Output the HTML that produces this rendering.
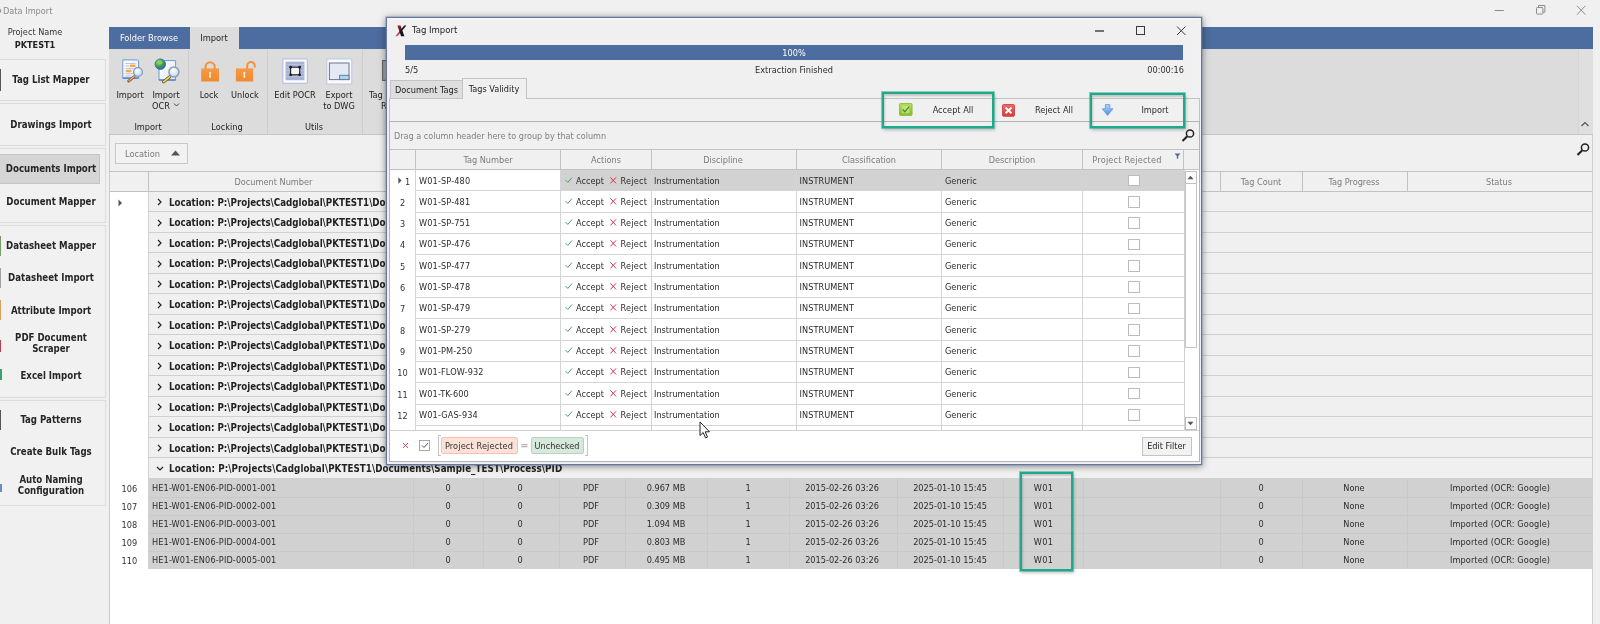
<!DOCTYPE html>
<html><head><meta charset="utf-8"><title>Data Import</title>
<style>
html,body{margin:0;padding:0}
body{width:1600px;height:624px;overflow:hidden;position:relative;background:#f0f0f0;font-family:"DejaVu Sans Condensed","Liberation Sans",sans-serif;font-size:9.1px;color:#2b2b2b}
div{position:absolute;box-sizing:border-box}
.t{height:16px;line-height:16px;white-space:pre}
.c{text-align:center}.r{text-align:right}
.b{font-weight:bold}
.h{color:#7a7a7a}
svg{position:absolute;overflow:visible}
</style></head><body>
<div id="app" style="left:0;top:0;width:1600px;height:624px;overflow:hidden;will-change:transform">

<svg style="left:0;top:8px" width="3" height="6"><circle cx="-1.4" cy="3" r="2.2" stroke="#8a8a8a" stroke-width="1" fill="none"/></svg>
<div class="t" style="left:3px;top:3px;color:#8a8a8a;font-size:9.15px">Data Import</div>
<svg style="left:1490px;top:2px" width="110" height="18"><g stroke="#8c8c8c" stroke-width="1" fill="none"><path d="M4.6 8.5h9.2"/><rect x="46.5" y="5.5" width="6.4" height="6.6" rx="0.8"/><path d="M48.5 5.5v-2h6.4v6.6h-2" /><path d="M87 3.8l8.4 8.8m0-8.8l-8.4 8.8"/></g></svg>
<div class="t c" style="left:-115px;top:24px;width:300px;color:#333">Project Name</div>
<div class="t b c" style="left:-115px;top:37px;width:300px;color:#222;font-size:9.05px">PKTEST1</div>
<div style="left:-2px;top:59px;width:108px;height:42px;border:1px solid #dcdcdc;background:#f1f1f1"></div>
<div style="left:-2px;top:103px;width:108px;height:43px;border:1px solid #dcdcdc;background:#f1f1f1"></div>
<div style="left:-2px;top:148px;width:108px;height:75px;border:1px solid #dcdcdc;background:#f1f1f1"></div>
<div style="left:-2px;top:224.6px;width:108px;height:173px;border:1px solid #dcdcdc;background:#f1f1f1"></div>
<div style="left:-2px;top:400px;width:108px;height:106px;border:1px solid #dcdcdc;background:#f1f1f1"></div>
<div style="left:0px;top:154px;width:100px;height:30px;background:#d5d5d5;border:1px solid #c4c4c4;border-left:none"></div>
<div class="t b c" style="left:-99px;top:72px;width:300px;color:#262626;font-size:9.6px">Tag List Mapper</div>
<div class="t b c" style="left:-99px;top:117px;width:300px;color:#262626;font-size:9.6px">Drawings Import</div>
<div class="t b c" style="left:-99px;top:160.5px;width:300px;color:#262626;font-size:9.6px">Documents Import</div>
<div class="t b c" style="left:-99px;top:194px;width:300px;color:#262626;font-size:9.6px">Document Mapper</div>
<div class="t b c" style="left:-99px;top:238px;width:300px;color:#262626;font-size:9.6px">Datasheet Mapper</div>
<div class="t b c" style="left:-99px;top:270px;width:300px;color:#262626;font-size:9.6px">Datasheet Import</div>
<div class="t b c" style="left:-99px;top:303px;width:300px;color:#262626;font-size:9.6px">Attribute Import</div>
<div class="t b c" style="left:-99px;top:330px;width:300px;color:#262626;font-size:9.6px">PDF Document</div>
<div class="t b c" style="left:-99px;top:341px;width:300px;color:#262626;font-size:9.6px">Scraper</div>
<div class="t b c" style="left:-99px;top:367.5px;width:300px;color:#262626;font-size:9.6px">Excel Import</div>
<div class="t b c" style="left:-99px;top:412px;width:300px;color:#262626;font-size:9.6px">Tag Patterns</div>
<div class="t b c" style="left:-99px;top:444px;width:300px;color:#262626;font-size:9.6px">Create Bulk Tags</div>
<div class="t b c" style="left:-99px;top:471.5px;width:300px;color:#262626;font-size:9.6px">Auto Naming</div>
<div class="t b c" style="left:-99px;top:483px;width:300px;color:#262626;font-size:9.6px">Configuration</div>
<div style="left:0px;top:69px;width:1px;height:22px;background:#555"></div>
<div style="left:0px;top:236px;width:1px;height:20px;background:#7a9a6a"></div>
<div style="left:0px;top:268px;width:1px;height:20px;background:#a0a0a0"></div>
<div style="left:0px;top:300px;width:1px;height:20px;background:#d8a060"></div>
<div style="left:0px;top:340px;width:1px;height:12px;background:#b04050"></div>
<div style="left:0px;top:369px;width:2px;height:11px;background:#3aa070"></div>
<div style="left:0px;top:410px;width:1px;height:20px;background:#555"></div>
<div style="left:0px;top:484px;width:2px;height:8px;background:#6a8ac0"></div>
<div style="left:109px;top:26.6px;width:1484px;height:22.4px;background:#4d6c9f"></div>
<div style="left:189.5px;top:26.6px;width:49.5px;height:23.4px;background:#dcdcdc"></div>
<div style="left:109px;top:49px;width:1484px;height:85px;background:#dcdcdc"></div>
<div style="left:109px;top:134px;width:1484px;height:1px;background:#c6c6c6"></div>
<div style="left:1578px;top:49px;width:15px;height:85px;background:#dfdfdf;border-left:1px solid #d4d4d4"></div>
<svg style="left:1580px;top:120px" width="10" height="8"><path d="M1.5 6l3.5-3.5l3.5 3.5" stroke="#555" stroke-width="1.2" fill="none"/></svg>
<div class="t c" style="left:-1px;top:30px;width:300px;color:#fff;font-size:9.2px">Folder Browse</div>
<div class="t c" style="left:64px;top:30px;width:300px;color:#222;font-size:9.2px">Import</div>
<div style="left:188px;top:50px;width:1px;height:84px;background:#cdcdcd"></div>
<div style="left:267px;top:50px;width:1px;height:84px;background:#cdcdcd"></div>
<div style="left:362px;top:50px;width:1px;height:84px;background:#cdcdcd"></div>
<div class="t c" style="left:-20px;top:87px;width:300px;color:#222;font-size:9.15px">Import</div>
<div class="t c" style="left:16px;top:87px;width:300px;color:#222;font-size:9.15px">Import</div>
<div class="t c" style="left:11px;top:98px;width:300px;color:#222;font-size:9.15px">OCR</div>
<div class="t c" style="left:59px;top:87px;width:300px;color:#222;font-size:9.15px">Lock</div>
<div class="t c" style="left:95px;top:87px;width:300px;color:#222;font-size:9.15px">Unlock</div>
<div class="t c" style="left:145px;top:87px;width:300px;color:#222;font-size:9.15px">Edit POCR</div>
<div class="t c" style="left:189px;top:87px;width:300px;color:#222;font-size:9.15px">Export</div>
<div class="t c" style="left:189px;top:98px;width:300px;color:#222;font-size:9.15px">to DWG</div>
<div class="t c" style="left:-2px;top:119px;width:300px;color:#222;font-size:9.15px">Import</div>
<div class="t c" style="left:77px;top:119px;width:300px;color:#222;font-size:9.15px">Locking</div>
<div class="t c" style="left:164px;top:119px;width:300px;color:#222;font-size:9.15px">Utils</div>
<div class="t" style="left:369px;top:87px;color:#222;font-size:9.15px">Tag</div>
<div class="t" style="left:381px;top:98px;color:#222;font-size:9.15px">R</div>
<svg style="left:173px;top:102px" width="8" height="6"><path d="M1 1.5l2.5 2.5l2.5-2.5" stroke="#444" stroke-width="1" fill="none"/></svg>
<svg width="0" height="0" style="left:0;top:0"><defs><radialGradient id="lens" cx="0.4" cy="0.35" r="0.7"><stop offset="0" stop-color="#ffffff"/><stop offset="1" stop-color="#b9d6f2"/></radialGradient><radialGradient id="globe" cx="0.35" cy="0.3" r="0.8"><stop offset="0" stop-color="#9fe07a"/><stop offset="0.55" stop-color="#3c9a4a"/><stop offset="1" stop-color="#2a5fb0"/></radialGradient><linearGradient id="pg" x1="0" y1="0" x2="1" y2="1"><stop offset="0" stop-color="#ffffff"/><stop offset="1" stop-color="#dfe8f6"/></linearGradient><linearGradient id="og" x1="0" y1="0" x2="0" y2="1"><stop offset="0" stop-color="#f59a44"/><stop offset="1" stop-color="#ee8a30"/></linearGradient></defs></svg>
<svg style="left:121px;top:58px" width="23" height="26" viewBox="0 0 23 26"><path d="M1.8 1.9h14.8l1 1v17.2h-15.8z" fill="url(#pg)" stroke="#6f98dc" stroke-width="1"/><path d="M1.8 20.1h15.8" stroke="#4f80d0" stroke-width="1.4"/><path d="M4.5 5.5h10M4.5 8h4M4.5 10.5h9M4.5 13h0M4.5 15.6h9M4.5 18h6" stroke="#aebbd2" stroke-width="0.8"/><rect x="9" y="6.6" width="5.6" height="2.4" fill="#f6ac42"/><rect x="4.8" y="11.8" width="5.6" height="2.4" fill="#f6ac42"/><path d="M13.2 18.6L7.6 23.2" stroke="#9a6232" stroke-width="2.8" stroke-linecap="round"/><path d="M13 18.5L8 22.6" stroke="#f0b070" stroke-width="1.2" stroke-linecap="round"/><circle cx="17" cy="14" r="4.4" fill="url(#lens)" stroke="#8496b6" stroke-width="1.3"/></svg>
<svg style="left:153px;top:57px" width="27" height="27" viewBox="0 0 27 27"><path d="M6 3.6h16.6v19.4h-16.6z" fill="url(#pg)" stroke="#6f98dc" stroke-width="1"/><path d="M6 23h16.6" stroke="#4f80d0" stroke-width="1.4"/><circle cx="7.3" cy="7.2" r="5.2" fill="url(#globe)" stroke="#3a6cc4" stroke-width="1"/><path d="M5 4.6q3-2 4.6 0.6q-0.4 2.4-2.8 2q-2 1.4-1.8-2.6z" fill="#7ad84a" opacity=".85"/><path d="M16.8 19.8L10.6 24.8" stroke="#6a5a20" stroke-width="3.2" stroke-linecap="round"/><path d="M16.6 19.9L10.8 24.6" stroke="#ecd650" stroke-width="1.8" stroke-linecap="round"/><circle cx="20.9" cy="15" r="5" fill="url(#lens)" stroke="#8e9cb4" stroke-width="1.5"/></svg>
<svg style="left:200px;top:60px" width="21" height="23" viewBox="0 0 21 23"><path d="M5.5 9.5v-2.6a4.6 4.6 0 0 1 9.2 0v2.6" fill="none" stroke="#f19238" stroke-width="2"/><rect x="1.2" y="8.4" width="17.8" height="13.1" fill="url(#og)"/><circle cx="10.1" cy="12.8" r="1.15" fill="#fdeacc"/><path d="M9.45 13h1.3l0.35 4.8h-2z" fill="#fdeacc"/></svg>
<svg style="left:234px;top:59px" width="25" height="24" viewBox="0 0 25 24"><path d="M13.2 10.5v-3.6a3.75 3.75 0 0 1 7.5 -0.2v1.9" fill="none" stroke="#f19238" stroke-width="2"/><rect x="1.9" y="9.4" width="17.3" height="13.1" fill="url(#og)"/><circle cx="10.3" cy="13.8" r="1.15" fill="#fdeacc"/><path d="M9.65 14h1.3l0.35 4.8h-2z" fill="#fdeacc"/></svg>
<svg style="left:282px;top:58px" width="26" height="26" viewBox="0 0 26 26"><rect x="0.8" y="0.8" width="24.6" height="24.6" rx="1" fill="#fafbfe" stroke="#b9c1dc" stroke-width="1.2"/><rect x="3.6" y="3.7" width="18.8" height="18.5" fill="#a9b4d4"/><path d="M3.6 6.5h18.8M3.6 9.5h18.8M3.6 12.5h18.8M3.6 15.5h18.8M3.6 18.5h18.8" stroke="#b9c3df" stroke-width="1"/><rect x="8.6" y="9.2" width="9.1" height="7.6" fill="#f4f5fa" stroke="#1c1c1c" stroke-width="1.1"/><g fill="#1c1c1c"><circle cx="8.6" cy="9.2" r="1.4"/><circle cx="17.7" cy="9.2" r="1.4"/><circle cx="8.6" cy="16.8" r="1.4"/><circle cx="17.7" cy="16.8" r="1.4"/></g></svg>
<svg style="left:326px;top:58px" width="27" height="27" viewBox="0 0 27 27"><rect x="0.8" y="0.8" width="25" height="25.4" rx="1" fill="#fafbfe" stroke="#c3cade" stroke-width="1.2"/><rect x="3.4" y="5" width="19.6" height="16.6" fill="#e6e9f3" stroke="#66749a" stroke-width="1"/><rect x="13.6" y="17.3" width="9.4" height="4.3" fill="#a9d6f2" stroke="#66749a" stroke-width="0.9"/></svg>
<svg style="left:382px;top:60px" width="6" height="21" viewBox="0 0 6 21"><rect x="0.6" y="0.6" width="8" height="19.8" fill="#a9a9a9" stroke="#666" stroke-width="1.2"/></svg>
<div style="left:109px;top:135px;width:1484px;height:37px;background:#f0f0f0"></div>
<div style="left:115px;top:143px;width:73px;height:21px;border:1px solid #c8c8c8;background:#f2f2f2"></div>
<div class="t" style="left:125px;top:145.5px;color:#7a7a7a;font-size:9.2px">Location</div>
<svg style="left:171px;top:150px" width="9" height="6"><path d="M0 5.5L4.5 0.5L9 5.5z" fill="#555"/></svg>
<svg style="left:1575.5px;top:142px" width="15" height="15"><circle cx="9" cy="5.5" r="3.6" stroke="#222" stroke-width="1.5" fill="none"/><path d="M6.3 8.2L1.5 13" stroke="#222" stroke-width="2"/></svg>
<div style="left:109px;top:171.3px;width:1484px;height:20.4px;background:#f0f0f0;border-top:1px solid #c2c2c2;border-bottom:1px solid #c2c2c2"></div>
<div style="left:148px;top:172px;width:1px;height:19px;background:#c2c2c2"></div>
<div style="left:1220px;top:172px;width:1px;height:19px;background:#c2c2c2"></div>
<div style="left:1302px;top:172px;width:1px;height:19px;background:#c2c2c2"></div>
<div style="left:1407px;top:172px;width:1px;height:19px;background:#c2c2c2"></div>
<div style="left:1592px;top:172px;width:1px;height:19px;background:#c2c2c2"></div>
<div class="t c" style="left:123.5px;top:174px;width:300px;color:#7a7a7a">Document Number</div>
<div class="t c" style="left:1111px;top:174px;width:300px;color:#7a7a7a">Tag Count</div>
<div class="t c" style="left:1204px;top:174px;width:300px;color:#7a7a7a">Tag Progress</div>
<div class="t c" style="left:1349px;top:174px;width:300px;color:#7a7a7a">Status</div>
<div style="left:109px;top:191.5px;width:39px;height:433px;background:#fff"></div>
<div style="left:148px;top:191.5px;width:1px;height:377px;background:#d0d0d0"></div>
<div style="left:149px;top:191.7px;width:1444px;height:20.51px;background:#f0f0f0;border-bottom:1px solid #d0d0d0"></div>
<svg style="left:157px;top:198.0px" width="6" height="8"><path d="M1 1l3 3l-3 3" stroke="#222" stroke-width="1.2" fill="none"/></svg>
<div class="t b" style="left:169px;top:194.7px;color:#222;font-size:9.7px">Location: P:\Projects\Cadglobal\PKTEST1\Documents</div>
<div style="left:149px;top:212.20999999999998px;width:1444px;height:20.51px;background:#f0f0f0;border-bottom:1px solid #d0d0d0"></div>
<svg style="left:157px;top:218.51px" width="6" height="8"><path d="M1 1l3 3l-3 3" stroke="#222" stroke-width="1.2" fill="none"/></svg>
<div class="t b" style="left:169px;top:215.20999999999998px;color:#222;font-size:9.7px">Location: P:\Projects\Cadglobal\PKTEST1\Documents</div>
<div style="left:149px;top:232.72px;width:1444px;height:20.51px;background:#f0f0f0;border-bottom:1px solid #d0d0d0"></div>
<svg style="left:157px;top:239.02px" width="6" height="8"><path d="M1 1l3 3l-3 3" stroke="#222" stroke-width="1.2" fill="none"/></svg>
<div class="t b" style="left:169px;top:235.72px;color:#222;font-size:9.7px">Location: P:\Projects\Cadglobal\PKTEST1\Documents</div>
<div style="left:149px;top:253.23px;width:1444px;height:20.51px;background:#f0f0f0;border-bottom:1px solid #d0d0d0"></div>
<svg style="left:157px;top:259.53px" width="6" height="8"><path d="M1 1l3 3l-3 3" stroke="#222" stroke-width="1.2" fill="none"/></svg>
<div class="t b" style="left:169px;top:256.23px;color:#222;font-size:9.7px">Location: P:\Projects\Cadglobal\PKTEST1\Documents</div>
<div style="left:149px;top:273.74px;width:1444px;height:20.51px;background:#f0f0f0;border-bottom:1px solid #d0d0d0"></div>
<svg style="left:157px;top:280.04px" width="6" height="8"><path d="M1 1l3 3l-3 3" stroke="#222" stroke-width="1.2" fill="none"/></svg>
<div class="t b" style="left:169px;top:276.74px;color:#222;font-size:9.7px">Location: P:\Projects\Cadglobal\PKTEST1\Documents</div>
<div style="left:149px;top:294.25px;width:1444px;height:20.51px;background:#f0f0f0;border-bottom:1px solid #d0d0d0"></div>
<svg style="left:157px;top:300.55px" width="6" height="8"><path d="M1 1l3 3l-3 3" stroke="#222" stroke-width="1.2" fill="none"/></svg>
<div class="t b" style="left:169px;top:297.25px;color:#222;font-size:9.7px">Location: P:\Projects\Cadglobal\PKTEST1\Documents</div>
<div style="left:149px;top:314.76px;width:1444px;height:20.51px;background:#f0f0f0;border-bottom:1px solid #d0d0d0"></div>
<svg style="left:157px;top:321.06px" width="6" height="8"><path d="M1 1l3 3l-3 3" stroke="#222" stroke-width="1.2" fill="none"/></svg>
<div class="t b" style="left:169px;top:317.76px;color:#222;font-size:9.7px">Location: P:\Projects\Cadglobal\PKTEST1\Documents</div>
<div style="left:149px;top:335.27px;width:1444px;height:20.51px;background:#f0f0f0;border-bottom:1px solid #d0d0d0"></div>
<svg style="left:157px;top:341.57px" width="6" height="8"><path d="M1 1l3 3l-3 3" stroke="#222" stroke-width="1.2" fill="none"/></svg>
<div class="t b" style="left:169px;top:338.27px;color:#222;font-size:9.7px">Location: P:\Projects\Cadglobal\PKTEST1\Documents</div>
<div style="left:149px;top:355.78px;width:1444px;height:20.51px;background:#f0f0f0;border-bottom:1px solid #d0d0d0"></div>
<svg style="left:157px;top:362.08px" width="6" height="8"><path d="M1 1l3 3l-3 3" stroke="#222" stroke-width="1.2" fill="none"/></svg>
<div class="t b" style="left:169px;top:358.78px;color:#222;font-size:9.7px">Location: P:\Projects\Cadglobal\PKTEST1\Documents</div>
<div style="left:149px;top:376.28999999999996px;width:1444px;height:20.51px;background:#f0f0f0;border-bottom:1px solid #d0d0d0"></div>
<svg style="left:157px;top:382.59px" width="6" height="8"><path d="M1 1l3 3l-3 3" stroke="#222" stroke-width="1.2" fill="none"/></svg>
<div class="t b" style="left:169px;top:379.28999999999996px;color:#222;font-size:9.7px">Location: P:\Projects\Cadglobal\PKTEST1\Documents</div>
<div style="left:149px;top:396.8px;width:1444px;height:20.51px;background:#f0f0f0;border-bottom:1px solid #d0d0d0"></div>
<svg style="left:157px;top:403.1px" width="6" height="8"><path d="M1 1l3 3l-3 3" stroke="#222" stroke-width="1.2" fill="none"/></svg>
<div class="t b" style="left:169px;top:399.8px;color:#222;font-size:9.7px">Location: P:\Projects\Cadglobal\PKTEST1\Documents</div>
<div style="left:149px;top:417.31px;width:1444px;height:20.51px;background:#f0f0f0;border-bottom:1px solid #d0d0d0"></div>
<svg style="left:157px;top:423.61px" width="6" height="8"><path d="M1 1l3 3l-3 3" stroke="#222" stroke-width="1.2" fill="none"/></svg>
<div class="t b" style="left:169px;top:420.31px;color:#222;font-size:9.7px">Location: P:\Projects\Cadglobal\PKTEST1\Documents</div>
<div style="left:149px;top:437.82px;width:1444px;height:20.51px;background:#f0f0f0;border-bottom:1px solid #d0d0d0"></div>
<svg style="left:157px;top:444.12px" width="6" height="8"><path d="M1 1l3 3l-3 3" stroke="#222" stroke-width="1.2" fill="none"/></svg>
<div class="t b" style="left:169px;top:440.82px;color:#222;font-size:9.7px">Location: P:\Projects\Cadglobal\PKTEST1\Documents</div>
<div style="left:149px;top:458.33px;width:1444px;height:20.51px;background:#f0f0f0;border-bottom:1px solid #d0d0d0"></div>
<svg style="left:156px;top:465.63px" width="8" height="6"><path d="M1 1l3 3l3-3" stroke="#222" stroke-width="1.2" fill="none"/></svg>
<div class="t b" style="left:169px;top:461.33px;color:#222;font-size:9.7px;letter-spacing:0.073px">Location: P:\Projects\Cadglobal\PKTEST1\Documents\Sample_TEST\Process\PID</div>
<svg style="left:117.7px;top:198.5px" width="5" height="8"><path d="M0.5 0.5L4 4L0.5 7.5z" fill="#555"/></svg>
<div style="left:149px;top:478.8px;width:1444px;height:90px;background:#d1d1d1"></div>
<div style="left:109px;top:568.5px;width:1484px;height:56px;background:#fff"></div>
<div style="left:1592px;top:135px;width:1px;height:489px;background:#cfcfcf"></div>
<div style="left:109px;top:135px;width:1px;height:489px;background:#cbcbcb"></div>
<div style="left:413px;top:478.8px;width:1px;height:90px;background:#c9c9c9"></div>
<div style="left:483px;top:478.8px;width:1px;height:90px;background:#c9c9c9"></div>
<div style="left:559px;top:478.8px;width:1px;height:90px;background:#c9c9c9"></div>
<div style="left:625px;top:478.8px;width:1px;height:90px;background:#c9c9c9"></div>
<div style="left:707px;top:478.8px;width:1px;height:90px;background:#c9c9c9"></div>
<div style="left:789px;top:478.8px;width:1px;height:90px;background:#c9c9c9"></div>
<div style="left:897px;top:478.8px;width:1px;height:90px;background:#c9c9c9"></div>
<div style="left:1003px;top:478.8px;width:1px;height:90px;background:#c9c9c9"></div>
<div style="left:1083px;top:478.8px;width:1px;height:90px;background:#c9c9c9"></div>
<div style="left:1220px;top:478.8px;width:1px;height:90px;background:#c9c9c9"></div>
<div style="left:1302px;top:478.8px;width:1px;height:90px;background:#c9c9c9"></div>
<div style="left:1407px;top:478.8px;width:1px;height:90px;background:#c9c9c9"></div>
<div class="t" style="left:121.5px;top:480.8px;color:#333">106</div>
<div class="t" style="left:152px;top:479.8px;letter-spacing:0.124px">HE1-W01-EN06-PID-0001-001</div>
<div class="t c" style="left:298px;top:479.8px;width:300px;">0</div>
<div class="t c" style="left:370px;top:479.8px;width:300px;">0</div>
<div class="t c" style="left:441px;top:479.8px;width:300px;">PDF</div>
<div class="t c" style="left:516px;top:479.8px;width:300px;">0.967 MB</div>
<div class="t c" style="left:598px;top:479.8px;width:300px;">1</div>
<div class="t c" style="left:692px;top:479.8px;width:300px;">2015-02-26 03:26</div>
<div class="t c" style="left:800px;top:479.8px;width:300px;">2025-01-10 15:45</div>
<div class="t c" style="left:893.5px;top:479.8px;width:300px;letter-spacing:0.3px">W01</div>
<div class="t c" style="left:1111px;top:479.8px;width:300px;">0</div>
<div class="t c" style="left:1204px;top:479.8px;width:300px;">None</div>
<div class="t c" style="left:1350px;top:479.8px;width:300px;letter-spacing:0.09px">Imported (OCR: Google)</div>
<div style="left:149px;top:496.8px;width:1444px;height:1px;background:#c9c9c9"></div>
<div class="t" style="left:121.5px;top:498.8px;color:#333">107</div>
<div class="t" style="left:152px;top:497.8px;letter-spacing:0.124px">HE1-W01-EN06-PID-0002-001</div>
<div class="t c" style="left:298px;top:497.8px;width:300px;">0</div>
<div class="t c" style="left:370px;top:497.8px;width:300px;">0</div>
<div class="t c" style="left:441px;top:497.8px;width:300px;">PDF</div>
<div class="t c" style="left:516px;top:497.8px;width:300px;">0.309 MB</div>
<div class="t c" style="left:598px;top:497.8px;width:300px;">1</div>
<div class="t c" style="left:692px;top:497.8px;width:300px;">2015-02-26 03:26</div>
<div class="t c" style="left:800px;top:497.8px;width:300px;">2025-01-10 15:45</div>
<div class="t c" style="left:893.5px;top:497.8px;width:300px;letter-spacing:0.3px">W01</div>
<div class="t c" style="left:1111px;top:497.8px;width:300px;">0</div>
<div class="t c" style="left:1204px;top:497.8px;width:300px;">None</div>
<div class="t c" style="left:1350px;top:497.8px;width:300px;letter-spacing:0.09px">Imported (OCR: Google)</div>
<div style="left:149px;top:514.8px;width:1444px;height:1px;background:#c9c9c9"></div>
<div class="t" style="left:121.5px;top:516.8px;color:#333">108</div>
<div class="t" style="left:152px;top:515.8px;letter-spacing:0.124px">HE1-W01-EN06-PID-0003-001</div>
<div class="t c" style="left:298px;top:515.8px;width:300px;">0</div>
<div class="t c" style="left:370px;top:515.8px;width:300px;">0</div>
<div class="t c" style="left:441px;top:515.8px;width:300px;">PDF</div>
<div class="t c" style="left:516px;top:515.8px;width:300px;">1.094 MB</div>
<div class="t c" style="left:598px;top:515.8px;width:300px;">1</div>
<div class="t c" style="left:692px;top:515.8px;width:300px;">2015-02-26 03:26</div>
<div class="t c" style="left:800px;top:515.8px;width:300px;">2025-01-10 15:45</div>
<div class="t c" style="left:893.5px;top:515.8px;width:300px;letter-spacing:0.3px">W01</div>
<div class="t c" style="left:1111px;top:515.8px;width:300px;">0</div>
<div class="t c" style="left:1204px;top:515.8px;width:300px;">None</div>
<div class="t c" style="left:1350px;top:515.8px;width:300px;letter-spacing:0.09px">Imported (OCR: Google)</div>
<div style="left:149px;top:532.8px;width:1444px;height:1px;background:#c9c9c9"></div>
<div class="t" style="left:121.5px;top:534.8px;color:#333">109</div>
<div class="t" style="left:152px;top:533.8px;letter-spacing:0.124px">HE1-W01-EN06-PID-0004-001</div>
<div class="t c" style="left:298px;top:533.8px;width:300px;">0</div>
<div class="t c" style="left:370px;top:533.8px;width:300px;">0</div>
<div class="t c" style="left:441px;top:533.8px;width:300px;">PDF</div>
<div class="t c" style="left:516px;top:533.8px;width:300px;">0.803 MB</div>
<div class="t c" style="left:598px;top:533.8px;width:300px;">1</div>
<div class="t c" style="left:692px;top:533.8px;width:300px;">2015-02-26 03:26</div>
<div class="t c" style="left:800px;top:533.8px;width:300px;">2025-01-10 15:45</div>
<div class="t c" style="left:893.5px;top:533.8px;width:300px;letter-spacing:0.3px">W01</div>
<div class="t c" style="left:1111px;top:533.8px;width:300px;">0</div>
<div class="t c" style="left:1204px;top:533.8px;width:300px;">None</div>
<div class="t c" style="left:1350px;top:533.8px;width:300px;letter-spacing:0.09px">Imported (OCR: Google)</div>
<div style="left:149px;top:550.8px;width:1444px;height:1px;background:#c9c9c9"></div>
<div class="t" style="left:121.5px;top:552.8px;color:#333">110</div>
<div class="t" style="left:152px;top:551.8px;letter-spacing:0.124px">HE1-W01-EN06-PID-0005-001</div>
<div class="t c" style="left:298px;top:551.8px;width:300px;">0</div>
<div class="t c" style="left:370px;top:551.8px;width:300px;">0</div>
<div class="t c" style="left:441px;top:551.8px;width:300px;">PDF</div>
<div class="t c" style="left:516px;top:551.8px;width:300px;">0.495 MB</div>
<div class="t c" style="left:598px;top:551.8px;width:300px;">1</div>
<div class="t c" style="left:692px;top:551.8px;width:300px;">2015-02-26 03:26</div>
<div class="t c" style="left:800px;top:551.8px;width:300px;">2025-01-10 15:45</div>
<div class="t c" style="left:893.5px;top:551.8px;width:300px;letter-spacing:0.3px">W01</div>
<div class="t c" style="left:1111px;top:551.8px;width:300px;">0</div>
<div class="t c" style="left:1204px;top:551.8px;width:300px;">None</div>
<div class="t c" style="left:1350px;top:551.8px;width:300px;letter-spacing:0.09px">Imported (OCR: Google)</div>
<div style="left:386px;top:17px;width:815.5px;height:447.5px;background:#f0f0f0;border:1px solid #64789f;box-shadow:0 0 0 0.6px rgba(120,140,175,.5),0 1px 7px rgba(0,0,0,.5)"></div>
<div style="left:387px;top:18px;width:813.5px;height:445.5px;border:2px solid #eef1f7;border-top-color:#f4f6fa"></div>
<svg style="left:395px;top:24.5px" width="12" height="12" viewBox="0 0 12 12"><defs><linearGradient id="xg1" x1="0" y1="0" x2="0.6" y2="1"><stop offset="0" stop-color="#a8202c"/><stop offset="0.5" stop-color="#5a1018"/><stop offset="0.62" stop-color="#141414"/></linearGradient><linearGradient id="xg2" x1="1" y1="0" x2="0" y2="1"><stop offset="0.42" stop-color="#141414"/><stop offset="0.6" stop-color="#a83040"/><stop offset="1" stop-color="#e07080"/></linearGradient></defs><path d="M9.3 0.5h2.1L2.6 11.3h-2.4z" fill="url(#xg2)"/><path d="M2.4 0.5h3.1l3.9 10.8h-3.3z" fill="url(#xg1)"/></svg>
<div class="t" style="left:412px;top:22px;color:#222;font-size:9.5px">Tag Import</div>
<svg style="left:1085px;top:20px" width="110" height="22"><g stroke="#3a3a3a" stroke-width="1" fill="none"><path d="M10 11h9" stroke-width="1.4"/><rect x="51.5" y="6.5" width="8" height="8"/><path d="M92 6.5l8.5 8.5m0-8.5l-8.5 8.5"/></g></svg>
<div style="left:405px;top:45px;width:778px;height:15px;background:#4d6c9f"></div>
<div class="t c" style="left:644px;top:44.5px;width:300px;color:#fff">100%</div>
<div class="t" style="left:405px;top:62px;">5/5</div>
<div class="t c" style="left:644px;top:62px;width:300px;">Extraction Finished</div>
<div class="t r" style="left:884px;top:62px;width:300px;">00:00:16</div>
<div style="left:390px;top:80px;width:73px;height:18.5px;background:#dedede;border:1px solid #c3c3c3;border-bottom:none"></div>
<div style="left:389px;top:98px;width:810.5px;height:24px;border:1px solid #c3c3c3;border-bottom:none;background:#f0f0f0"></div>
<div style="left:462px;top:78px;width:65px;height:21px;background:#f0f0f0;border:1px solid #c3c3c3;border-bottom:none"></div>
<div class="t c" style="left:276.5px;top:81.5px;width:300px;color:#222">Document Tags</div>
<div class="t c" style="left:344px;top:80.5px;width:300px;color:#222">Tags Validity</div>
<div class="t c" style="left:803px;top:101.5px;width:300px;">Accept All</div>
<div class="t c" style="left:904px;top:101.5px;width:300px;">Reject All</div>
<div class="t c" style="left:1005px;top:101.5px;width:300px;">Import</div>
<svg style="left:899px;top:103px" width="14" height="13" viewBox="0 0 14 13"><defs><linearGradient id="acg" x1="0" y1="0" x2="0" y2="1"><stop offset="0" stop-color="#b4dc5a"/><stop offset="1" stop-color="#86bd2e"/></linearGradient></defs><rect x="0.5" y="0.5" width="12.6" height="12" rx="1" fill="url(#acg)" stroke="#86b63a" stroke-width="0.8"/><rect x="2.8" y="3" width="7.6" height="7.2" fill="#d6ecaa" opacity=".55"/><path d="M3.6 6.4l2.2 2.4L10.2 3.6" fill="none" stroke="#4f8a1e" stroke-width="1.3"/></svg>
<svg style="left:1001.5px;top:103.5px" width="13" height="13" viewBox="0 0 13 13"><defs><linearGradient id="rjg" x1="0" y1="0" x2="0" y2="1"><stop offset="0" stop-color="#ee6a6a"/><stop offset="1" stop-color="#d83a3a"/></linearGradient></defs><rect x="0.5" y="0.5" width="12" height="11.8" rx="1" fill="url(#rjg)" stroke="#c63a3a" stroke-width="0.8"/><path d="M3.6 3.6l5.8 5.6m0-5.6l-5.8 5.6" fill="none" stroke="#fff" stroke-width="2"/></svg>
<svg style="left:1102px;top:104px" width="12" height="13" viewBox="0 0 12 13"><defs><linearGradient id="img" x1="0" y1="0" x2="0" y2="1"><stop offset="0" stop-color="#b4d6f8"/><stop offset="1" stop-color="#4a92e0"/></linearGradient></defs><path d="M3.4 0.6h4.4v4.2h3.2l-5.4 6.6l-5.4-6.6h3.2z" fill="url(#img)" stroke="#5a9ae0" stroke-width="0.8"/></svg>
<div style="left:389px;top:121px;width:810.5px;height:341px;background:#fff;border:1px solid #b4b4b4"></div>
<div style="left:390px;top:122px;width:808.5px;height:27px;background:#f0f0f0"></div>
<div class="t" style="left:394px;top:128px;color:#808080;font-size:9px">Drag a column header here to group by that column</div>
<svg style="left:1180.7px;top:128px" width="15" height="15"><circle cx="9" cy="5.5" r="3.6" stroke="#222" stroke-width="1.5" fill="none"/><path d="M6.3 8.2L1.5 13" stroke="#222" stroke-width="2"/></svg>
<div style="left:390px;top:149px;width:808.5px;height:20.5px;background:#f0f0f0;border-top:1px solid #c2c2c2;border-bottom:1px solid #c2c2c2"></div>
<div style="left:415px;top:150px;width:1px;height:19px;background:#c2c2c2"></div>
<div style="left:560px;top:150px;width:1px;height:19px;background:#c2c2c2"></div>
<div style="left:651px;top:150px;width:1px;height:19px;background:#c2c2c2"></div>
<div style="left:796px;top:150px;width:1px;height:19px;background:#c2c2c2"></div>
<div style="left:941px;top:150px;width:1px;height:19px;background:#c2c2c2"></div>
<div style="left:1082px;top:150px;width:1px;height:19px;background:#c2c2c2"></div>
<div style="left:1183px;top:150px;width:1px;height:19px;background:#c2c2c2"></div>
<div class="t c" style="left:338px;top:151.5px;width:300px;color:#7a7a7a">Tag Number</div>
<div class="t c" style="left:456px;top:151.5px;width:300px;color:#7a7a7a">Actions</div>
<div class="t c" style="left:573px;top:151.5px;width:300px;color:#7a7a7a">Discipline</div>
<div class="t c" style="left:719px;top:151.5px;width:300px;color:#7a7a7a">Classification</div>
<div class="t c" style="left:862px;top:151.5px;width:300px;color:#7a7a7a">Description</div>
<div class="t c" style="left:977px;top:151.5px;width:300px;color:#7a7a7a;letter-spacing:0.2px">Project Rejected</div>
<svg style="left:1174px;top:153px" width="7" height="7"><path d="M0.5 0.5h6l-2.3 2.6v3l-1.4-0.9v-2.1z" fill="#4d6c9f"/></svg>
<div style="left:560.5px;top:170px;width:623px;height:20.33px;background:#d2d2d2"></div>
<div style="left:415px;top:190.32999999999998px;width:768.5px;height:1px;background:#d4d4d4"></div>
<div class="t c" style="left:257.7px;top:173.5px;width:300px;color:#333">1</div>
<div class="t" style="left:419px;top:172.5px;letter-spacing:0.13px">W01-SP-480</div>
<svg style="left:565px;top:176.90px" width="8" height="7"><path d="M0.5 3.1l2.3 2.3L6.9 0.6" stroke="#4a9a64" stroke-width="1" fill="none"/></svg>
<div class="t" style="left:576px;top:172.5px;">Accept</div>
<svg style="left:610px;top:176.90px" width="7" height="7"><path d="M0.4 0.4l5.6 6m0-6l-5.6 6" stroke="#d8304c" stroke-width="1" fill="none"/></svg>
<div class="t" style="left:620.5px;top:172.5px;letter-spacing:0.25px">Reject</div>
<div class="t" style="left:654px;top:172.5px;">Instrumentation</div>
<div class="t" style="left:799.5px;top:172.5px;letter-spacing:0.08px">INSTRUMENT</div>
<div class="t" style="left:945px;top:172.5px;">Generic</div>
<div style="left:1128px;top:174.8px;width:12px;height:11.4px;background:#fff;border:1px solid #bcbcbc"></div>
<div style="left:415px;top:211.65999999999997px;width:768.5px;height:1px;background:#d4d4d4"></div>
<div class="t c" style="left:252.5px;top:194.82999999999998px;width:300px;color:#333">2</div>
<div class="t" style="left:419px;top:193.82999999999998px;letter-spacing:0.13px">W01-SP-481</div>
<svg style="left:565px;top:197.90px" width="8" height="7"><path d="M0.5 3.1l2.3 2.3L6.9 0.6" stroke="#4a9a64" stroke-width="1" fill="none"/></svg>
<div class="t" style="left:576px;top:193.82999999999998px;">Accept</div>
<svg style="left:610px;top:197.90px" width="7" height="7"><path d="M0.4 0.4l5.6 6m0-6l-5.6 6" stroke="#d8304c" stroke-width="1" fill="none"/></svg>
<div class="t" style="left:620.5px;top:193.82999999999998px;letter-spacing:0.25px">Reject</div>
<div class="t" style="left:654px;top:193.82999999999998px;">Instrumentation</div>
<div class="t" style="left:799.5px;top:193.82999999999998px;letter-spacing:0.08px">INSTRUMENT</div>
<div class="t" style="left:945px;top:193.82999999999998px;">Generic</div>
<div style="left:1128px;top:196.13px;width:12px;height:11.4px;background:#fff;border:1px solid #bcbcbc"></div>
<div style="left:415px;top:232.99px;width:768.5px;height:1px;background:#d4d4d4"></div>
<div class="t c" style="left:252.5px;top:216.16px;width:300px;color:#333">3</div>
<div class="t" style="left:419px;top:215.16px;letter-spacing:0.13px">W01-SP-751</div>
<svg style="left:565px;top:218.90px" width="8" height="7"><path d="M0.5 3.1l2.3 2.3L6.9 0.6" stroke="#4a9a64" stroke-width="1" fill="none"/></svg>
<div class="t" style="left:576px;top:215.16px;">Accept</div>
<svg style="left:610px;top:218.90px" width="7" height="7"><path d="M0.4 0.4l5.6 6m0-6l-5.6 6" stroke="#d8304c" stroke-width="1" fill="none"/></svg>
<div class="t" style="left:620.5px;top:215.16px;letter-spacing:0.25px">Reject</div>
<div class="t" style="left:654px;top:215.16px;">Instrumentation</div>
<div class="t" style="left:799.5px;top:215.16px;letter-spacing:0.08px">INSTRUMENT</div>
<div class="t" style="left:945px;top:215.16px;">Generic</div>
<div style="left:1128px;top:217.46px;width:12px;height:11.4px;background:#fff;border:1px solid #bcbcbc"></div>
<div style="left:415px;top:254.32px;width:768.5px;height:1px;background:#d4d4d4"></div>
<div class="t c" style="left:252.5px;top:237.49px;width:300px;color:#333">4</div>
<div class="t" style="left:419px;top:236.49px;letter-spacing:0.13px">W01-SP-476</div>
<svg style="left:565px;top:239.90px" width="8" height="7"><path d="M0.5 3.1l2.3 2.3L6.9 0.6" stroke="#4a9a64" stroke-width="1" fill="none"/></svg>
<div class="t" style="left:576px;top:236.49px;">Accept</div>
<svg style="left:610px;top:239.90px" width="7" height="7"><path d="M0.4 0.4l5.6 6m0-6l-5.6 6" stroke="#d8304c" stroke-width="1" fill="none"/></svg>
<div class="t" style="left:620.5px;top:236.49px;letter-spacing:0.25px">Reject</div>
<div class="t" style="left:654px;top:236.49px;">Instrumentation</div>
<div class="t" style="left:799.5px;top:236.49px;letter-spacing:0.08px">INSTRUMENT</div>
<div class="t" style="left:945px;top:236.49px;">Generic</div>
<div style="left:1128px;top:238.79000000000002px;width:12px;height:11.4px;background:#fff;border:1px solid #bcbcbc"></div>
<div style="left:415px;top:275.65px;width:768.5px;height:1px;background:#d4d4d4"></div>
<div class="t c" style="left:252.5px;top:258.82px;width:300px;color:#333">5</div>
<div class="t" style="left:419px;top:257.82px;letter-spacing:0.13px">W01-SP-477</div>
<svg style="left:565px;top:261.90px" width="8" height="7"><path d="M0.5 3.1l2.3 2.3L6.9 0.6" stroke="#4a9a64" stroke-width="1" fill="none"/></svg>
<div class="t" style="left:576px;top:257.82px;">Accept</div>
<svg style="left:610px;top:261.90px" width="7" height="7"><path d="M0.4 0.4l5.6 6m0-6l-5.6 6" stroke="#d8304c" stroke-width="1" fill="none"/></svg>
<div class="t" style="left:620.5px;top:257.82px;letter-spacing:0.25px">Reject</div>
<div class="t" style="left:654px;top:257.82px;">Instrumentation</div>
<div class="t" style="left:799.5px;top:257.82px;letter-spacing:0.08px">INSTRUMENT</div>
<div class="t" style="left:945px;top:257.82px;">Generic</div>
<div style="left:1128px;top:260.12px;width:12px;height:11.4px;background:#fff;border:1px solid #bcbcbc"></div>
<div style="left:415px;top:296.97999999999996px;width:768.5px;height:1px;background:#d4d4d4"></div>
<div class="t c" style="left:252.5px;top:280.15px;width:300px;color:#333">6</div>
<div class="t" style="left:419px;top:279.15px;letter-spacing:0.13px">W01-SP-478</div>
<svg style="left:565px;top:282.90px" width="8" height="7"><path d="M0.5 3.1l2.3 2.3L6.9 0.6" stroke="#4a9a64" stroke-width="1" fill="none"/></svg>
<div class="t" style="left:576px;top:279.15px;">Accept</div>
<svg style="left:610px;top:282.90px" width="7" height="7"><path d="M0.4 0.4l5.6 6m0-6l-5.6 6" stroke="#d8304c" stroke-width="1" fill="none"/></svg>
<div class="t" style="left:620.5px;top:279.15px;letter-spacing:0.25px">Reject</div>
<div class="t" style="left:654px;top:279.15px;">Instrumentation</div>
<div class="t" style="left:799.5px;top:279.15px;letter-spacing:0.08px">INSTRUMENT</div>
<div class="t" style="left:945px;top:279.15px;">Generic</div>
<div style="left:1128px;top:281.45px;width:12px;height:11.4px;background:#fff;border:1px solid #bcbcbc"></div>
<div style="left:415px;top:318.31px;width:768.5px;height:1px;background:#d4d4d4"></div>
<div class="t c" style="left:252.5px;top:301.48px;width:300px;color:#333">7</div>
<div class="t" style="left:419px;top:300.48px;letter-spacing:0.13px">W01-SP-479</div>
<svg style="left:565px;top:303.90px" width="8" height="7"><path d="M0.5 3.1l2.3 2.3L6.9 0.6" stroke="#4a9a64" stroke-width="1" fill="none"/></svg>
<div class="t" style="left:576px;top:300.48px;">Accept</div>
<svg style="left:610px;top:303.90px" width="7" height="7"><path d="M0.4 0.4l5.6 6m0-6l-5.6 6" stroke="#d8304c" stroke-width="1" fill="none"/></svg>
<div class="t" style="left:620.5px;top:300.48px;letter-spacing:0.25px">Reject</div>
<div class="t" style="left:654px;top:300.48px;">Instrumentation</div>
<div class="t" style="left:799.5px;top:300.48px;letter-spacing:0.08px">INSTRUMENT</div>
<div class="t" style="left:945px;top:300.48px;">Generic</div>
<div style="left:1128px;top:302.78000000000003px;width:12px;height:11.4px;background:#fff;border:1px solid #bcbcbc"></div>
<div style="left:415px;top:339.64px;width:768.5px;height:1px;background:#d4d4d4"></div>
<div class="t c" style="left:252.5px;top:322.81px;width:300px;color:#333">8</div>
<div class="t" style="left:419px;top:321.81px;letter-spacing:0.13px">W01-SP-279</div>
<svg style="left:565px;top:325.90px" width="8" height="7"><path d="M0.5 3.1l2.3 2.3L6.9 0.6" stroke="#4a9a64" stroke-width="1" fill="none"/></svg>
<div class="t" style="left:576px;top:321.81px;">Accept</div>
<svg style="left:610px;top:325.90px" width="7" height="7"><path d="M0.4 0.4l5.6 6m0-6l-5.6 6" stroke="#d8304c" stroke-width="1" fill="none"/></svg>
<div class="t" style="left:620.5px;top:321.81px;letter-spacing:0.25px">Reject</div>
<div class="t" style="left:654px;top:321.81px;">Instrumentation</div>
<div class="t" style="left:799.5px;top:321.81px;letter-spacing:0.08px">INSTRUMENT</div>
<div class="t" style="left:945px;top:321.81px;">Generic</div>
<div style="left:1128px;top:324.11px;width:12px;height:11.4px;background:#fff;border:1px solid #bcbcbc"></div>
<div style="left:415px;top:360.96999999999997px;width:768.5px;height:1px;background:#d4d4d4"></div>
<div class="t c" style="left:252.5px;top:344.14px;width:300px;color:#333">9</div>
<div class="t" style="left:419px;top:343.14px;letter-spacing:0.13px">W01-PM-250</div>
<svg style="left:565px;top:346.90px" width="8" height="7"><path d="M0.5 3.1l2.3 2.3L6.9 0.6" stroke="#4a9a64" stroke-width="1" fill="none"/></svg>
<div class="t" style="left:576px;top:343.14px;">Accept</div>
<svg style="left:610px;top:346.90px" width="7" height="7"><path d="M0.4 0.4l5.6 6m0-6l-5.6 6" stroke="#d8304c" stroke-width="1" fill="none"/></svg>
<div class="t" style="left:620.5px;top:343.14px;letter-spacing:0.25px">Reject</div>
<div class="t" style="left:654px;top:343.14px;">Instrumentation</div>
<div class="t" style="left:799.5px;top:343.14px;letter-spacing:0.08px">INSTRUMENT</div>
<div class="t" style="left:945px;top:343.14px;">Generic</div>
<div style="left:1128px;top:345.44px;width:12px;height:11.4px;background:#fff;border:1px solid #bcbcbc"></div>
<div style="left:415px;top:382.29999999999995px;width:768.5px;height:1px;background:#d4d4d4"></div>
<div class="t c" style="left:252.5px;top:365.46999999999997px;width:300px;color:#333">10</div>
<div class="t" style="left:419px;top:364.46999999999997px;letter-spacing:0.13px">W01-FLOW-932</div>
<svg style="left:565px;top:367.90px" width="8" height="7"><path d="M0.5 3.1l2.3 2.3L6.9 0.6" stroke="#4a9a64" stroke-width="1" fill="none"/></svg>
<div class="t" style="left:576px;top:364.46999999999997px;">Accept</div>
<svg style="left:610px;top:367.90px" width="7" height="7"><path d="M0.4 0.4l5.6 6m0-6l-5.6 6" stroke="#d8304c" stroke-width="1" fill="none"/></svg>
<div class="t" style="left:620.5px;top:364.46999999999997px;letter-spacing:0.25px">Reject</div>
<div class="t" style="left:654px;top:364.46999999999997px;">Instrumentation</div>
<div class="t" style="left:799.5px;top:364.46999999999997px;letter-spacing:0.08px">INSTRUMENT</div>
<div class="t" style="left:945px;top:364.46999999999997px;">Generic</div>
<div style="left:1128px;top:366.77px;width:12px;height:11.4px;background:#fff;border:1px solid #bcbcbc"></div>
<div style="left:415px;top:403.62999999999994px;width:768.5px;height:1px;background:#d4d4d4"></div>
<div class="t c" style="left:252.5px;top:386.79999999999995px;width:300px;color:#333">11</div>
<div class="t" style="left:419px;top:385.79999999999995px;letter-spacing:0.13px">W01-TK-600</div>
<svg style="left:565px;top:389.90px" width="8" height="7"><path d="M0.5 3.1l2.3 2.3L6.9 0.6" stroke="#4a9a64" stroke-width="1" fill="none"/></svg>
<div class="t" style="left:576px;top:385.79999999999995px;">Accept</div>
<svg style="left:610px;top:389.90px" width="7" height="7"><path d="M0.4 0.4l5.6 6m0-6l-5.6 6" stroke="#d8304c" stroke-width="1" fill="none"/></svg>
<div class="t" style="left:620.5px;top:385.79999999999995px;letter-spacing:0.25px">Reject</div>
<div class="t" style="left:654px;top:385.79999999999995px;">Instrumentation</div>
<div class="t" style="left:799.5px;top:385.79999999999995px;letter-spacing:0.08px">INSTRUMENT</div>
<div class="t" style="left:945px;top:385.79999999999995px;">Generic</div>
<div style="left:1128px;top:388.09999999999997px;width:12px;height:11.4px;background:#fff;border:1px solid #bcbcbc"></div>
<div style="left:415px;top:424.96px;width:768.5px;height:1px;background:#d4d4d4"></div>
<div class="t c" style="left:252.5px;top:408.13px;width:300px;color:#333">12</div>
<div class="t" style="left:419px;top:407.13px;letter-spacing:0.13px">W01-GAS-934</div>
<svg style="left:565px;top:410.90px" width="8" height="7"><path d="M0.5 3.1l2.3 2.3L6.9 0.6" stroke="#4a9a64" stroke-width="1" fill="none"/></svg>
<div class="t" style="left:576px;top:407.13px;">Accept</div>
<svg style="left:610px;top:410.90px" width="7" height="7"><path d="M0.4 0.4l5.6 6m0-6l-5.6 6" stroke="#d8304c" stroke-width="1" fill="none"/></svg>
<div class="t" style="left:620.5px;top:407.13px;letter-spacing:0.25px">Reject</div>
<div class="t" style="left:654px;top:407.13px;">Instrumentation</div>
<div class="t" style="left:799.5px;top:407.13px;letter-spacing:0.08px">INSTRUMENT</div>
<div class="t" style="left:945px;top:407.13px;">Generic</div>
<div style="left:1128px;top:409.43px;width:12px;height:11.4px;background:#fff;border:1px solid #bcbcbc"></div>
<div style="left:415px;top:170px;width:1px;height:262px;background:#d4d4d4"></div>
<div style="left:560px;top:170px;width:1px;height:262px;background:#d4d4d4"></div>
<div style="left:651px;top:170px;width:1px;height:262px;background:#d4d4d4"></div>
<div style="left:796px;top:170px;width:1px;height:262px;background:#d4d4d4"></div>
<div style="left:941px;top:170px;width:1px;height:262px;background:#d4d4d4"></div>
<div style="left:1082px;top:170px;width:1px;height:262px;background:#d4d4d4"></div>
<div style="left:415px;top:425.96px;width:1px;height:6px;background:#d4d4d4"></div>
<svg style="left:397.8px;top:176.8px" width="4" height="7"><path d="M0.3 0.3L3.6 3.5L0.3 6.7z" fill="#555"/></svg>
<div style="left:1183.5px;top:170px;width:14px;height:261.5px;background:#fff;border-left:1px solid #d0d0d0"></div>
<div style="left:1184.5px;top:171px;width:12px;height:13px;background:#fdfdfd;border:1px solid #c0c0c0"></div>
<div style="left:1184.5px;top:184px;width:12px;height:164px;background:#fff;border:1px solid #c4c4c4;border-top:none"></div>
<div style="left:1184.5px;top:417px;width:12px;height:13px;background:#fdfdfd;border:1px solid #c0c0c0"></div>
<svg style="left:1187px;top:175px" width="7" height="5"><path d="M0.5 4.2L3.5 0.8L6.5 4.2z" fill="#555"/></svg>
<svg style="left:1187px;top:421px" width="7" height="5"><path d="M0.5 0.8L3.5 4.2L6.5 0.8z" fill="#555"/></svg>
<div style="left:390px;top:430px;width:808.5px;height:31px;background:#fff;border-top:1px solid #d0d0d0"></div>
<svg style="left:402px;top:442px" width="7" height="7"><path d="M1 1l5 5m0-5l-5 5" stroke="#e0405c" stroke-width="0.95" fill="none"/></svg>
<div style="left:419px;top:440px;width:11px;height:11px;background:#fff;border:1px solid #a8a8a8"></div>
<svg style="left:420.5px;top:442px" width="8" height="7"><path d="M1 3.5l2 2L7 1" stroke="#555" stroke-width="1" fill="none"/></svg>
<div style="left:438px;top:435px;width:3px;height:21px;border:1px solid #c4c4c4;border-right:none"></div>
<div style="left:585px;top:435px;width:3px;height:21px;border:1px solid #c4c4c4;border-left:none"></div>
<div style="left:440.5px;top:436.8px;width:77.5px;height:17.6px;background:#fbe1d6;border:1px solid #f2c4b0;border-radius:2px"></div>
<div class="t c" style="left:329px;top:438px;width:300px;color:#333;letter-spacing:0.13px">Project Rejected</div>
<div class="t c" style="left:374.5px;top:438px;width:300px;color:#b4b4b4;font-size:11px;font-weight:bold">=</div>
<div style="left:531px;top:436.8px;width:53px;height:17.6px;background:#d6e9dc;border:1px solid #b4d4be;border-radius:2px"></div>
<div class="t c" style="left:407px;top:438px;width:300px;color:#333">Unchecked</div>
<div style="left:1142px;top:436.5px;width:50px;height:19.5px;background:#f2f2f2;border:1px solid #c4c4c4"></div>
<div class="t c" style="left:1016.5px;top:438.3px;width:300px;color:#222">Edit Filter</div>
<div style="left:882px;top:91.7px;width:111.8px;height:36.3px;border:2px solid #1daa8c;box-shadow:0 0 0 1px rgba(29,170,140,.5),1px 2px 3px rgba(0,0,0,.25),inset 1px 2px 2px rgba(0,0,0,.18)"></div>
<div style="left:1089.9px;top:92.6px;width:95px;height:35.4px;border:2px solid #1daa8c;box-shadow:0 0 0 1px rgba(29,170,140,.5),1px 2px 3px rgba(0,0,0,.25),inset 1px 2px 2px rgba(0,0,0,.18)"></div>
<div style="left:1020px;top:471.5px;width:53px;height:99.8px;border:2px solid #1daa8c;box-shadow:0 0 0 1px rgba(29,170,140,.5),1px 2px 3px rgba(0,0,0,.25),inset 1px 2px 2px rgba(0,0,0,.18)"></div>
<svg style="left:699px;top:421px" width="13" height="19"><path d="M1 1v13.5l3.2-3l2.3 5.4l2-0.9l-2.3-5.2h4.3z" fill="#fff" stroke="#222" stroke-width="1"/></svg>
</div>
</body></html>
